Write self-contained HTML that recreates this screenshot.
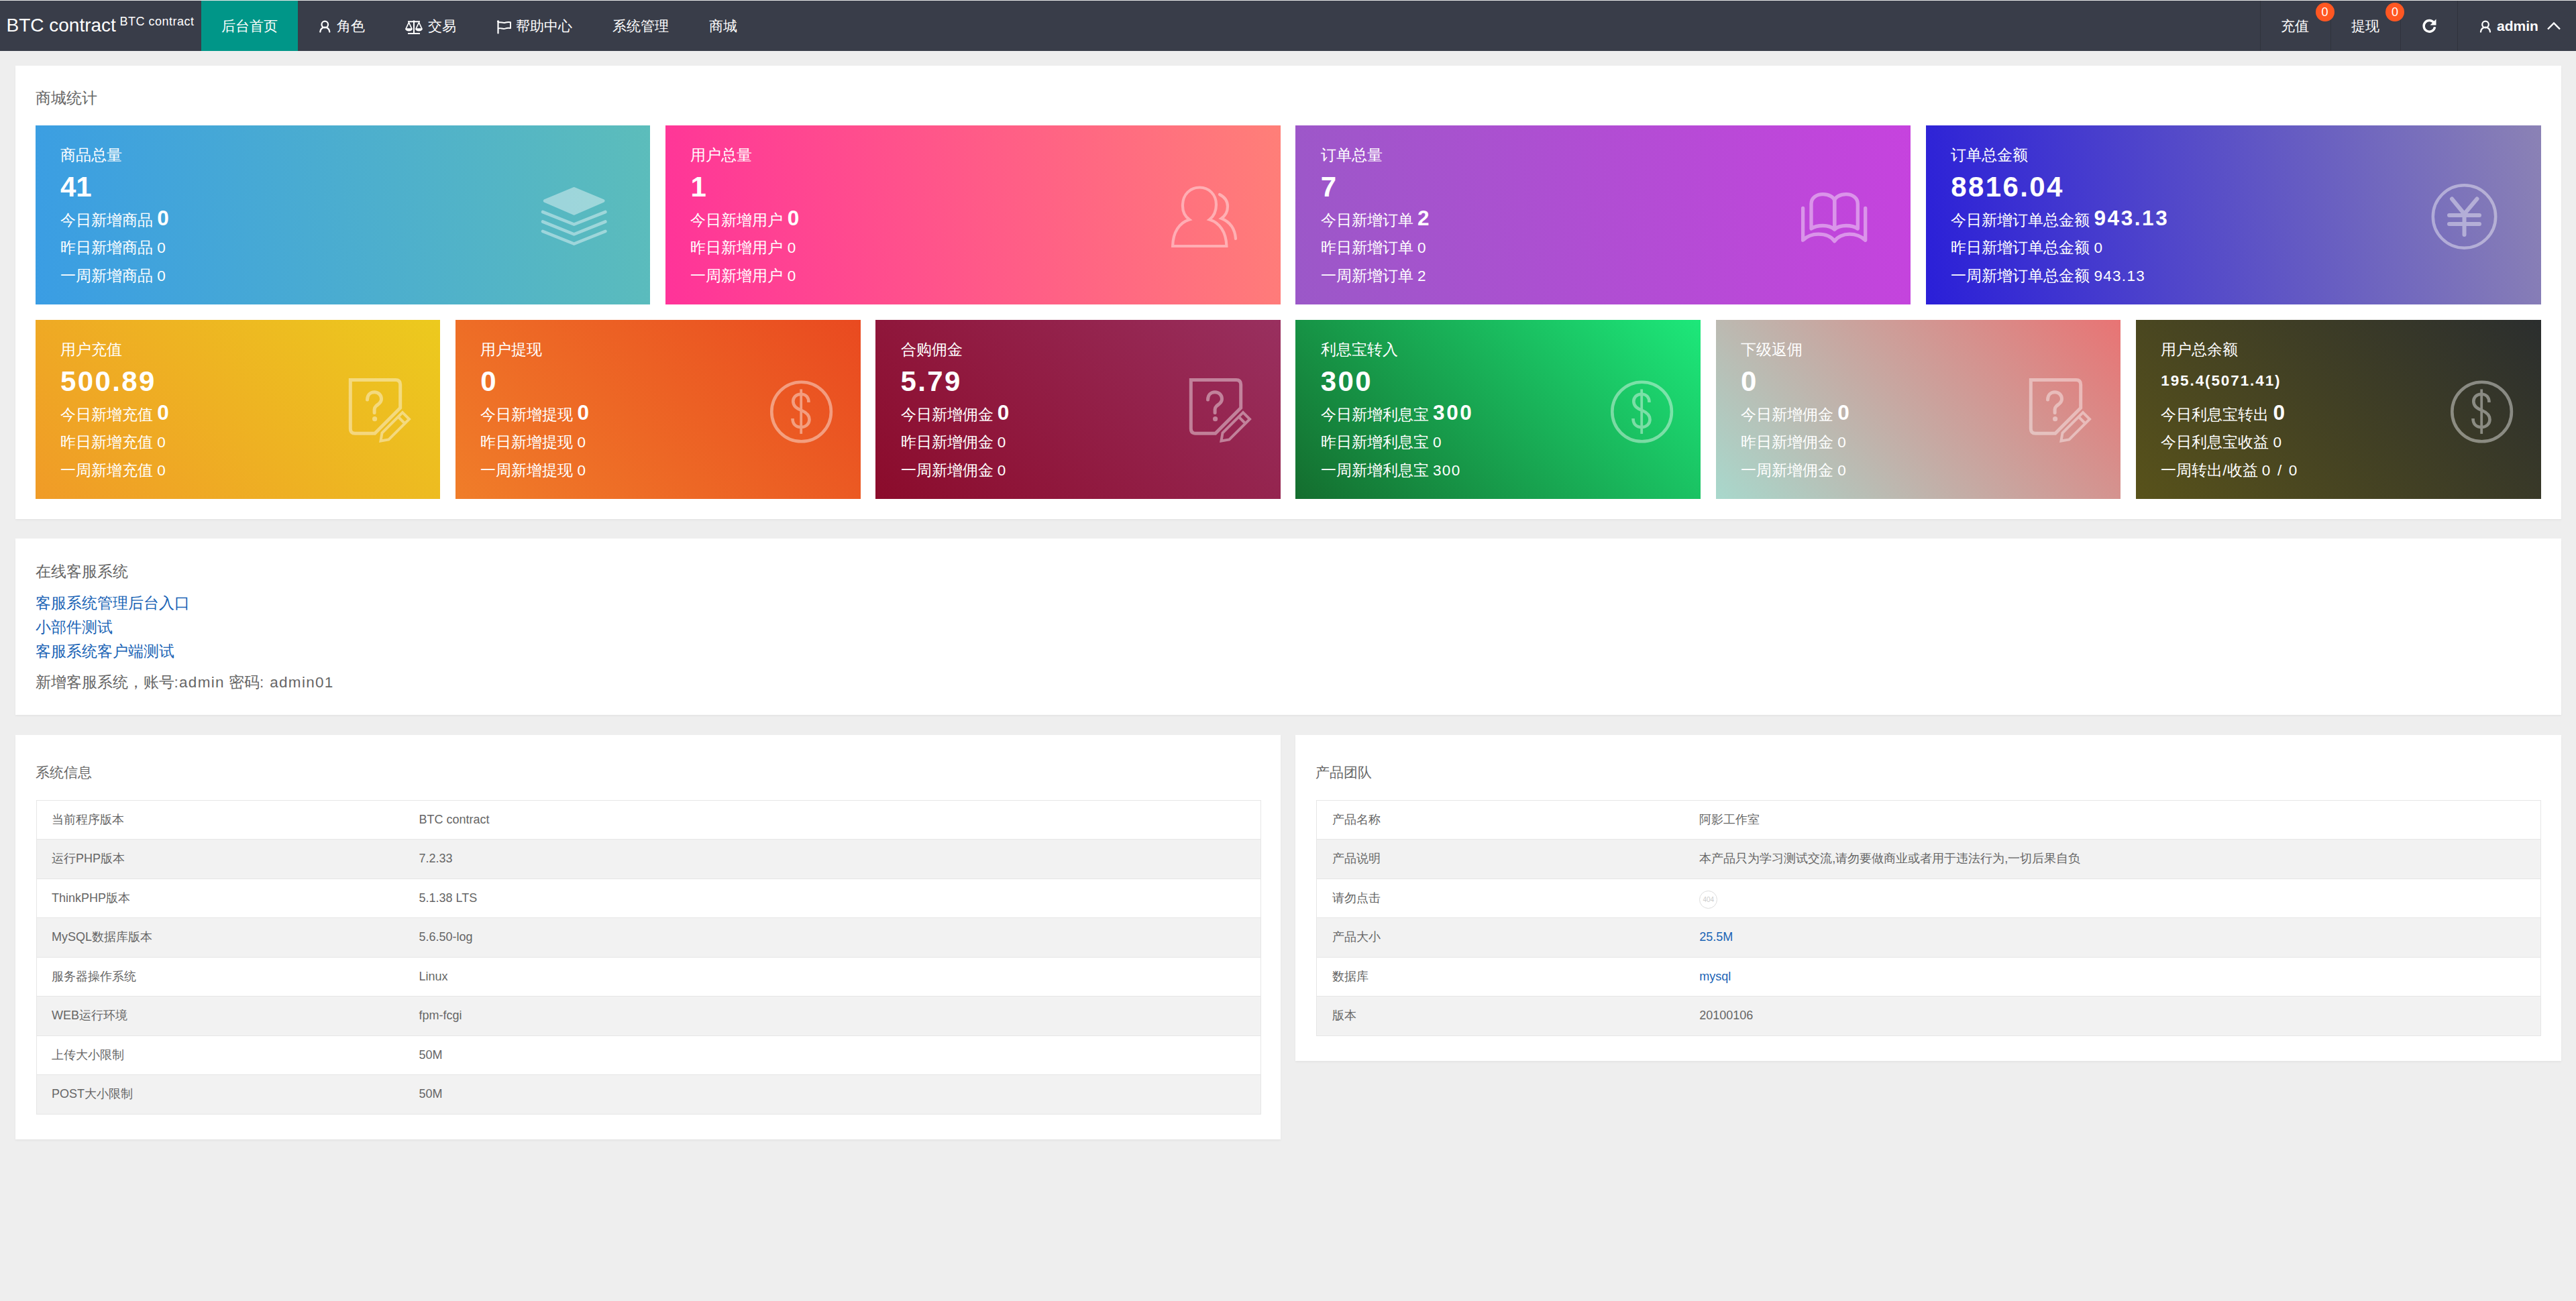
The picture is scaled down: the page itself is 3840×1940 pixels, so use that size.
<!DOCTYPE html><html><head><meta charset="utf-8"><title>BTC contract</title><style>
*{margin:0;padding:0;box-sizing:border-box}
html,body{width:3840px;height:1940px;overflow:hidden}
body{background:#eeeeee;position:relative;font-family:"Liberation Sans",sans-serif;color:#666}
.a{position:absolute;white-space:nowrap}
.nav{position:absolute;left:0;top:1px;width:3840px;height:75px;background:#393d49}
.topline{position:absolute;left:0;top:0;width:3840px;height:1px;background:#e8e8e8}
.ni{position:absolute;top:0;height:75px;line-height:75px;font-size:21px;color:#fff}
.sep{position:absolute;top:0;width:1px;height:75px;background:#30333d}
.badge{position:absolute;width:28px;height:28px;border-radius:50%;background:#ff5722;color:#fff;font-size:18px;line-height:28px;text-align:center}
.card{position:absolute;background:#fff;box-shadow:0 1.5px 3px rgba(0,0,0,.05)}
.st{position:absolute;color:#fff;overflow:hidden}
.st .l{position:absolute;left:37.5px;white-space:nowrap;font-size:22.5px}
.st .big{font-size:42px;font-weight:bold}
.st b{font-size:31.5px;font-weight:bold}
.st svg{position:absolute}
.ttl{position:absolute;font-size:22.5px;color:#666;white-space:nowrap}
.lnk{position:absolute;font-size:22.5px;color:#1a64b6;white-space:nowrap}
.tb{position:absolute;border:1px solid #e6e6e6;overflow:hidden}
.tr{position:absolute;left:0;right:0;height:58.5px;border-bottom:1px solid #e6e6e6}
.tr.e{background:#f2f2f2}
.td{position:absolute;top:0;line-height:57.5px;font-size:18px;color:#666;white-space:nowrap}
</style></head><body>
<div class="topline"></div><div class="nav">
<div class="a" style="left:9.5px;top:-1px;height:75px;line-height:75px;font-size:28px;color:#fff">BTC contract</div>
<div class="a" style="left:178.5px;top:4.5px;height:52px;line-height:52px;font-size:18px;letter-spacing:0.5px;color:#fff">BTC contract</div>
<div class="a" style="left:300px;top:0;width:144px;height:75px;background:#009688"></div>
<div class="ni" style="left:330px">后台首页</div>
<svg class="a" style="left:474px;top:28px" width="22" height="22" viewBox="0 0 22 22"><circle cx="10.3" cy="7.5" r="4.8" fill="none" stroke="#fff" stroke-width="2.2"/><path d="M3.3 18.6 A7 7 0 0 1 17.3 18.6" fill="none" stroke="#fff" stroke-width="2.3" stroke-linecap="round"/></svg>
<div class="ni" style="left:502px">角色</div>
<svg class="a" style="left:603px;top:28px" width="28" height="24" viewBox="0 0 28 24"><path d="M5 3.2h18M14 2.5v18.5M5 21h18" stroke="#fff" stroke-width="2" fill="none"/><circle cx="14" cy="2.8" r="1.6" fill="#fff"/><path d="M6.5 4.5 L2 14 H11 Z M21.5 4.5 L17 14 H26 Z" stroke="#fff" stroke-width="1.7" fill="none" stroke-linejoin="round"/><path d="M1.2 14 h10.6 a5.3 3.4 0 0 1 -10.6 0z M16.2 14 h10.6 a5.3 3.4 0 0 1 -10.6 0z" fill="#fff"/></svg>
<div class="ni" style="left:638px">交易</div>
<svg class="a" style="left:740px;top:28px" width="24" height="22" viewBox="0 0 24 22"><path d="M2.5 3v17.5" stroke="#fff" stroke-width="2.2" stroke-linecap="round" fill="none"/><circle cx="2.5" cy="2.8" r="1.6" fill="#fff"/><path d="M3 4.5 C6.5 3 9.5 6 13 4.8 C16 3.8 18.5 3.8 21 4.3 V13 C18.5 12.5 16 12.5 13 13.6 C9.5 15 6.5 12 3 13.5" stroke="#fff" stroke-width="2" fill="none" stroke-linejoin="round"/></svg>
<div class="ni" style="left:769px">帮助中心</div>
<div class="ni" style="left:913px">系统管理</div>
<div class="ni" style="left:1057px">商城</div>
<div class="sep" style="left:3369px"></div>
<div class="sep" style="left:3474px"></div>
<div class="sep" style="left:3578px"></div>
<div class="sep" style="left:3663px"></div>
<div class="ni" style="left:3400px">充值</div>
<div class="badge" style="left:3451.5px;top:2.5px">0</div>
<div class="ni" style="left:3505px">提现</div>
<div class="badge" style="left:3556px;top:2.5px">0</div>
<svg class="a" style="left:3609px;top:24.5px" width="25" height="25" viewBox="0 0 25 25"><path d="M19.5 8.5 A8.3 8.3 0 1 0 20.6 14.2" fill="none" stroke="#fff" stroke-width="3.4"/><path d="M22.5 2.5 V11.5 H13.5 Z" fill="#fff"/></svg>
<svg class="a" style="left:3695px;top:28px" width="22" height="22" viewBox="0 0 22 22"><circle cx="10" cy="7.5" r="4.8" fill="none" stroke="#fff" stroke-width="2.2"/><path d="M3 18.6 A7 7 0 0 1 17 18.6" fill="none" stroke="#fff" stroke-width="2.3" stroke-linecap="round"/></svg>
<div class="ni" style="left:3722px;font-weight:bold">admin</div>
<svg class="a" style="left:3796px;top:31px" width="22" height="14" viewBox="0 0 22 14"><path d="M2 11.5 L11 2.5 L20 11.5" fill="none" stroke="#fff" stroke-width="2.4"/></svg>
</div>
<div class="card" style="left:22.5px;top:97.5px;width:3795px;height:676px"></div>
<div class="ttl" style="left:52.5px;top:126px;line-height:42px">商城统计</div>
<div class="st" style="left:52.5px;top:187px;width:916.875px;height:267px;background:linear-gradient(80deg,#3a9de4,#5cbdbb)"><div class="l" style="top:24px;line-height:42px">商品总量</div><div class="l big" style="top:62px;line-height:60px;">41</div><div class="l" style="top:117px;line-height:42px">今日新增商品 <b>0</b></div><div class="l" style="top:162px;line-height:42px">昨日新增商品 <span>0</span></div><div class="l" style="top:204px;line-height:42px">一周新增商品 <span>0</span></div><svg style="left:747.5px;top:83px" width="112" height="106" viewBox="0 0 112 106"><g fill="none" stroke="#fff" opacity="0.42" stroke-linecap="round" stroke-linejoin="round"><path d="M55.7 11.5 L99 29.5 L55.7 48.3 L12.4 29.5 Z" fill="#fff" stroke-width="5"/><path d="M9 46 L55.7 64.6 L102.5 46 M9 60.5 L55.7 79.3 L102.5 60.5 M9 74.8 L55.7 93.6 L102.5 74.8" stroke-width="4.6" stroke-linejoin="miter"/></g></svg></div>
<div class="st" style="left:991.875px;top:187px;width:916.875px;height:267px;background:linear-gradient(80deg,#ff3399,#ff7f78)"><div class="l" style="top:24px;line-height:42px">用户总量</div><div class="l big" style="top:62px;line-height:60px;">1</div><div class="l" style="top:117px;line-height:42px">今日新增用户 <b>0</b></div><div class="l" style="top:162px;line-height:42px">昨日新增用户 <span>0</span></div><div class="l" style="top:204px;line-height:42px">一周新增用户 <span>0</span></div><svg style="left:748.1px;top:83px" width="110" height="105" viewBox="0 0 110 105"><g fill="none" stroke="#fff" opacity="0.42" stroke-linecap="round" stroke-linejoin="round"><path d="M33 57.5 C25.5 52 22.5 44 23 35 C23.5 20 34 9.5 48.4 9.5 C62 9.5 73 20 73 35 C73 44 70 52 63 57.5 C78 62 88 76 88.4 97 L8.1 97 C8.5 76 18 62 33 57.5 Z" stroke-width="4.2" stroke-linejoin="miter"/><path d="M78 20 C86 24 90 30 90 38 C90 46 86 52 80.7 55.7 C94 61 101 72 102 86" stroke-width="4.2" stroke-linejoin="miter"/></g></svg></div>
<div class="st" style="left:1931.25px;top:187px;width:916.875px;height:267px;background:linear-gradient(80deg,#9b58c8,#c643de)"><div class="l" style="top:24px;line-height:42px">订单总量</div><div class="l big" style="top:62px;line-height:60px;">7</div><div class="l" style="top:117px;line-height:42px">今日新增订单 <b>2</b></div><div class="l" style="top:162px;line-height:42px">昨日新增订单 <span>0</span></div><div class="l" style="top:204px;line-height:42px">一周新增订单 <span>2</span></div><svg style="left:748.75px;top:93px" width="110" height="90" viewBox="0 0 110 90"><g fill="none" stroke="#fff" opacity="0.42" stroke-linecap="round" stroke-linejoin="round"><path d="M20 61 V24 C20 15 28 9.7 37.5 9.7 C46 9.7 54.7 14 54.7 20 V62 C50 58 44 56.5 37.5 56.5 C30 56.5 24 58 20 61 Z" stroke-width="5.3"/><path d="M89.3 61 V24 C89.3 15 81 9.7 72 9.7 C63 9.7 54.7 14 54.7 20 V62 C59 58 65 56.5 72 56.5 C79 56.5 85 58 89.3 61 Z" stroke-width="5.3"/><path d="M7.6 30.4 V78.2 C14 72 22 69.2 30.5 69.2 C41 69.2 50 73 54.7 79.6 C59 73 68 69.2 77 69.2 C86 69.2 94 72 100.7 78.2 V30.4" stroke-width="5.3"/></g></svg></div>
<div class="st" style="left:2870.625px;top:187px;width:916.875px;height:267px;background:linear-gradient(80deg,#2a1fd8,#8b82b5)"><div class="l" style="top:24px;line-height:42px">订单总金额</div><div class="l big" style="top:62px;line-height:60px;letter-spacing:2.4px">8816.04</div><div class="l" style="top:117px;line-height:42px">今日新增订单总金额 <b style="letter-spacing:2.6px">943.13</b></div><div class="l" style="top:162px;line-height:42px">昨日新增订单总金额 <span style="letter-spacing:1px">0</span></div><div class="l" style="top:204px;line-height:42px">一周新增订单总金额 <span style="letter-spacing:1.3px">943.13</span></div><svg style="left:752.4px;top:86px" width="101" height="101" viewBox="0 0 101 101"><g fill="none" stroke="#fff" opacity="0.42" stroke-linecap="round" stroke-linejoin="round"><circle cx="50.5" cy="50" r="46.7" stroke-width="4.5"/><path d="M32 23.5 L50.5 46 L69.5 23.5 M28 48 H73 M28 61 H73 M50.5 46 V77" stroke-width="6"/></g></svg></div>
<div class="st" style="left:52.5px;top:477px;width:603.75px;height:267px;background:linear-gradient(45deg,#f09b27,#ecca1e)"><div class="l" style="top:24px;line-height:42px">用户充值</div><div class="l big" style="top:62px;line-height:60px;letter-spacing:2.4px">500.89</div><div class="l" style="top:117px;line-height:42px">今日新增充值 <b>0</b></div><div class="l" style="top:162px;line-height:42px">昨日新增充值 <span>0</span></div><div class="l" style="top:204px;line-height:42px">一周新增充值 <span>0</span></div><svg style="left:447.5px;top:73px" width="120" height="115" viewBox="0 0 120 115"><g fill="none" stroke="#fff" opacity="0.42" stroke-linecap="round" stroke-linejoin="round"><path d="M58.8 96.2 L29.3 96.2 Q22.3 96.2 22.3 89.2 L22.3 16.4 L89.7 16.4 Q96.7 16.4 96.7 23.4 L96.7 58.3 Z" stroke-width="5" stroke-linejoin="miter"/><path d="M47.5 46.1 C47.5 39 52 34.7 58.1 34.7 C64 34.7 68.5 39 68.5 45 C68.5 51 63 53 60.5 55.5 C58.7 57.3 58.1 58.5 58.1 60.5 V65.5" stroke-width="5"/><circle cx="58.6" cy="74.7" r="3.6" fill="#fff" stroke="none"/><path d="M67.5 107.5 L69.5 95.5 L100 65 L110 75 L79.5 105.5 Z M93.5 71.5 L103.5 81.5" stroke-width="4" stroke-linejoin="miter"/></g></svg></div>
<div class="st" style="left:678.75px;top:477px;width:603.75px;height:267px;background:linear-gradient(45deg,#f07d29,#e94a20)"><div class="l" style="top:24px;line-height:42px">用户提现</div><div class="l big" style="top:62px;line-height:60px;">0</div><div class="l" style="top:117px;line-height:42px">今日新增提现 <b>0</b></div><div class="l" style="top:162px;line-height:42px">昨日新增提现 <span>0</span></div><div class="l" style="top:204px;line-height:42px">一周新增提现 <span>0</span></div><svg style="left:466.25px;top:88px" width="100" height="100" viewBox="0 0 100 100"><g fill="none" stroke="#fff" opacity="0.42" stroke-linecap="round" stroke-linejoin="round"><circle cx="49.6" cy="49" r="44.3" stroke-width="4.6"/><path d="M49.2 15.4 V81.9" stroke-width="3.8" stroke-linecap="butt"/><path d="M60.5 35 C60.5 27 56 22.8 49 22.8 C41 22.8 37.3 28 37.3 33.5 C37.3 41 43 44 50 47 C57 50 61.5 54 61.5 60.5 C61.5 67.5 56 72 49 72 C41 72 36.5 67 36.5 59" stroke-width="4.6" stroke-linecap="butt"/></g></svg></div>
<div class="st" style="left:1305px;top:477px;width:603.75px;height:267px;background:linear-gradient(45deg,#8b0b2b,#99305f)"><div class="l" style="top:24px;line-height:42px">合购佣金</div><div class="l big" style="top:62px;line-height:60px;letter-spacing:2.4px">5.79</div><div class="l" style="top:117px;line-height:42px">今日新增佣金 <b>0</b></div><div class="l" style="top:162px;line-height:42px">昨日新增佣金 <span>0</span></div><div class="l" style="top:204px;line-height:42px">一周新增佣金 <span>0</span></div><svg style="left:447.5px;top:73px" width="120" height="115" viewBox="0 0 120 115"><g fill="none" stroke="#fff" opacity="0.42" stroke-linecap="round" stroke-linejoin="round"><path d="M58.8 96.2 L29.3 96.2 Q22.3 96.2 22.3 89.2 L22.3 16.4 L89.7 16.4 Q96.7 16.4 96.7 23.4 L96.7 58.3 Z" stroke-width="5" stroke-linejoin="miter"/><path d="M47.5 46.1 C47.5 39 52 34.7 58.1 34.7 C64 34.7 68.5 39 68.5 45 C68.5 51 63 53 60.5 55.5 C58.7 57.3 58.1 58.5 58.1 60.5 V65.5" stroke-width="5"/><circle cx="58.6" cy="74.7" r="3.6" fill="#fff" stroke="none"/><path d="M67.5 107.5 L69.5 95.5 L100 65 L110 75 L79.5 105.5 Z M93.5 71.5 L103.5 81.5" stroke-width="4" stroke-linejoin="miter"/></g></svg></div>
<div class="st" style="left:1931.25px;top:477px;width:603.75px;height:267px;background:linear-gradient(45deg,#146d2e,#1de87a)"><div class="l" style="top:24px;line-height:42px">利息宝转入</div><div class="l big" style="top:62px;line-height:60px;letter-spacing:2.4px">300</div><div class="l" style="top:117px;line-height:42px">今日新增利息宝 <b style="letter-spacing:2.6px">300</b></div><div class="l" style="top:162px;line-height:42px">昨日新增利息宝 <span style="letter-spacing:1px">0</span></div><div class="l" style="top:204px;line-height:42px">一周新增利息宝 <span style="letter-spacing:1.3px">300</span></div><svg style="left:466.25px;top:88px" width="100" height="100" viewBox="0 0 100 100"><g fill="none" stroke="#fff" opacity="0.42" stroke-linecap="round" stroke-linejoin="round"><circle cx="49.6" cy="49" r="44.3" stroke-width="4.6"/><path d="M49.2 15.4 V81.9" stroke-width="3.8" stroke-linecap="butt"/><path d="M60.5 35 C60.5 27 56 22.8 49 22.8 C41 22.8 37.3 28 37.3 33.5 C37.3 41 43 44 50 47 C57 50 61.5 54 61.5 60.5 C61.5 67.5 56 72 49 72 C41 72 36.5 67 36.5 59" stroke-width="4.6" stroke-linecap="butt"/></g></svg></div>
<div class="st" style="left:2557.5px;top:477px;width:603.75px;height:267px;background:linear-gradient(45deg,#a8d8cc,#e87474)"><div class="l" style="top:24px;line-height:42px">下级返佣</div><div class="l big" style="top:62px;line-height:60px;">0</div><div class="l" style="top:117px;line-height:42px">今日新增佣金 <b>0</b></div><div class="l" style="top:162px;line-height:42px">昨日新增佣金 <span>0</span></div><div class="l" style="top:204px;line-height:42px">一周新增佣金 <span>0</span></div><svg style="left:447.5px;top:73px" width="120" height="115" viewBox="0 0 120 115"><g fill="none" stroke="#fff" opacity="0.42" stroke-linecap="round" stroke-linejoin="round"><path d="M58.8 96.2 L29.3 96.2 Q22.3 96.2 22.3 89.2 L22.3 16.4 L89.7 16.4 Q96.7 16.4 96.7 23.4 L96.7 58.3 Z" stroke-width="5" stroke-linejoin="miter"/><path d="M47.5 46.1 C47.5 39 52 34.7 58.1 34.7 C64 34.7 68.5 39 68.5 45 C68.5 51 63 53 60.5 55.5 C58.7 57.3 58.1 58.5 58.1 60.5 V65.5" stroke-width="5"/><circle cx="58.6" cy="74.7" r="3.6" fill="#fff" stroke="none"/><path d="M67.5 107.5 L69.5 95.5 L100 65 L110 75 L79.5 105.5 Z M93.5 71.5 L103.5 81.5" stroke-width="4" stroke-linejoin="miter"/></g></svg></div>
<div class="st" style="left:3183.75px;top:477px;width:603.75px;height:267px;background:linear-gradient(45deg,#58521a,#2b2e2e)"><div class="l" style="top:24px;line-height:42px">用户总余额</div><div class="l big" style="top:62px;line-height:60px;font-size:22.5px;letter-spacing:1.9px;top:76px;line-height:30px">195.4(5071.41)</div><div class="l" style="top:117px;line-height:42px">今日利息宝转出 <b>0</b></div><div class="l" style="top:162px;line-height:42px">今日利息宝收益 <span style="letter-spacing:1px">0</span></div><div class="l" style="top:204px;line-height:42px">一周转出/收益 <span style="letter-spacing:2.2px">0 / 0</span></div><svg style="left:466.25px;top:88px" width="100" height="100" viewBox="0 0 100 100"><g fill="none" stroke="#fff" opacity="0.42" stroke-linecap="round" stroke-linejoin="round"><circle cx="49.6" cy="49" r="44.3" stroke-width="4.6"/><path d="M49.2 15.4 V81.9" stroke-width="3.8" stroke-linecap="butt"/><path d="M60.5 35 C60.5 27 56 22.8 49 22.8 C41 22.8 37.3 28 37.3 33.5 C37.3 41 43 44 50 47 C57 50 61.5 54 61.5 60.5 C61.5 67.5 56 72 49 72 C41 72 36.5 67 36.5 59" stroke-width="4.6" stroke-linecap="butt"/></g></svg></div>
<div class="card" style="left:22.5px;top:803px;width:3795px;height:262.5px"></div>
<div class="ttl" style="left:52.5px;top:831.5px;line-height:42px">在线客服系统</div>
<div class="lnk" style="left:52.5px;top:882px;line-height:36px">客服系统管理后台入口</div>
<div class="lnk" style="left:52.5px;top:918px;line-height:36px">小部件测试</div>
<div class="lnk" style="left:52.5px;top:954px;line-height:36px">客服系统客户端测试</div>
<div class="ttl" style="left:52.5px;top:1000px;line-height:36px">新增客服系统，账号<span style="letter-spacing:1.3px">:admin</span> 密码<span style="letter-spacing:1.3px">: admin01</span></div>
<div class="card" style="left:22.5px;top:1096px;width:1886.25px;height:603px"></div>
<div class="ttl" style="left:52.5px;top:1131px;line-height:42px;font-size:21px">系统信息</div>
<div class="tb" style="left:53.5px;top:1192.5px;width:1826px;height:469.0px">
<div class="tr" style="top:0.0px"><div class="td" style="left:22.5px">当前程序版本</div><div class="td" style="left:570px">BTC contract</div></div>
<div class="tr e" style="top:58.5px"><div class="td" style="left:22.5px">运行PHP版本</div><div class="td" style="left:570px">7.2.33</div></div>
<div class="tr" style="top:117.0px"><div class="td" style="left:22.5px">ThinkPHP版本</div><div class="td" style="left:570px">5.1.38 LTS</div></div>
<div class="tr e" style="top:175.5px"><div class="td" style="left:22.5px">MySQL数据库版本</div><div class="td" style="left:570px">5.6.50-log</div></div>
<div class="tr" style="top:234.0px"><div class="td" style="left:22.5px">服务器操作系统</div><div class="td" style="left:570px">Linux</div></div>
<div class="tr e" style="top:292.5px"><div class="td" style="left:22.5px">WEB运行环境</div><div class="td" style="left:570px">fpm-fcgi</div></div>
<div class="tr" style="top:351.0px"><div class="td" style="left:22.5px">上传大小限制</div><div class="td" style="left:570px">50M</div></div>
<div class="tr e" style="top:409.5px"><div class="td" style="left:22.5px">POST大小限制</div><div class="td" style="left:570px">50M</div></div>
</div>
<div class="card" style="left:1931.25px;top:1096px;width:1886.25px;height:486px"></div>
<div class="ttl" style="left:1961.25px;top:1131px;line-height:42px;font-size:21px">产品团队</div>
<div class="tb" style="left:1962.25px;top:1192.5px;width:1826px;height:352.0px">
<div class="tr" style="top:0.0px"><div class="td" style="left:22.5px">产品名称</div><div class="td" style="left:570px">阿影工作室</div></div>
<div class="tr e" style="top:58.5px"><div class="td" style="left:22.5px">产品说明</div><div class="td" style="left:570px">本产品只为学习测试交流,请勿要做商业或者用于违法行为,一切后果自负</div></div>
<div class="tr" style="top:117.0px"><div class="td" style="left:22.5px">请勿点击</div><div class="td" style="left:570px"><span style="display:inline-block;position:relative;top:2px;width:27px;height:27px;border:1.5px solid #ddd;border-radius:50%;font-size:10px;line-height:26px;text-align:center;color:#ccc;vertical-align:middle">404</span></div></div>
<div class="tr e" style="top:175.5px"><div class="td" style="left:22.5px">产品大小</div><div class="td" style="left:570px"><span style="color:#1a64b6">25.5M</span></div></div>
<div class="tr" style="top:234.0px"><div class="td" style="left:22.5px">数据库</div><div class="td" style="left:570px"><span style="color:#1a64b6">mysql</span></div></div>
<div class="tr e" style="top:292.5px"><div class="td" style="left:22.5px">版本</div><div class="td" style="left:570px">20100106</div></div>
</div>
</body></html>
